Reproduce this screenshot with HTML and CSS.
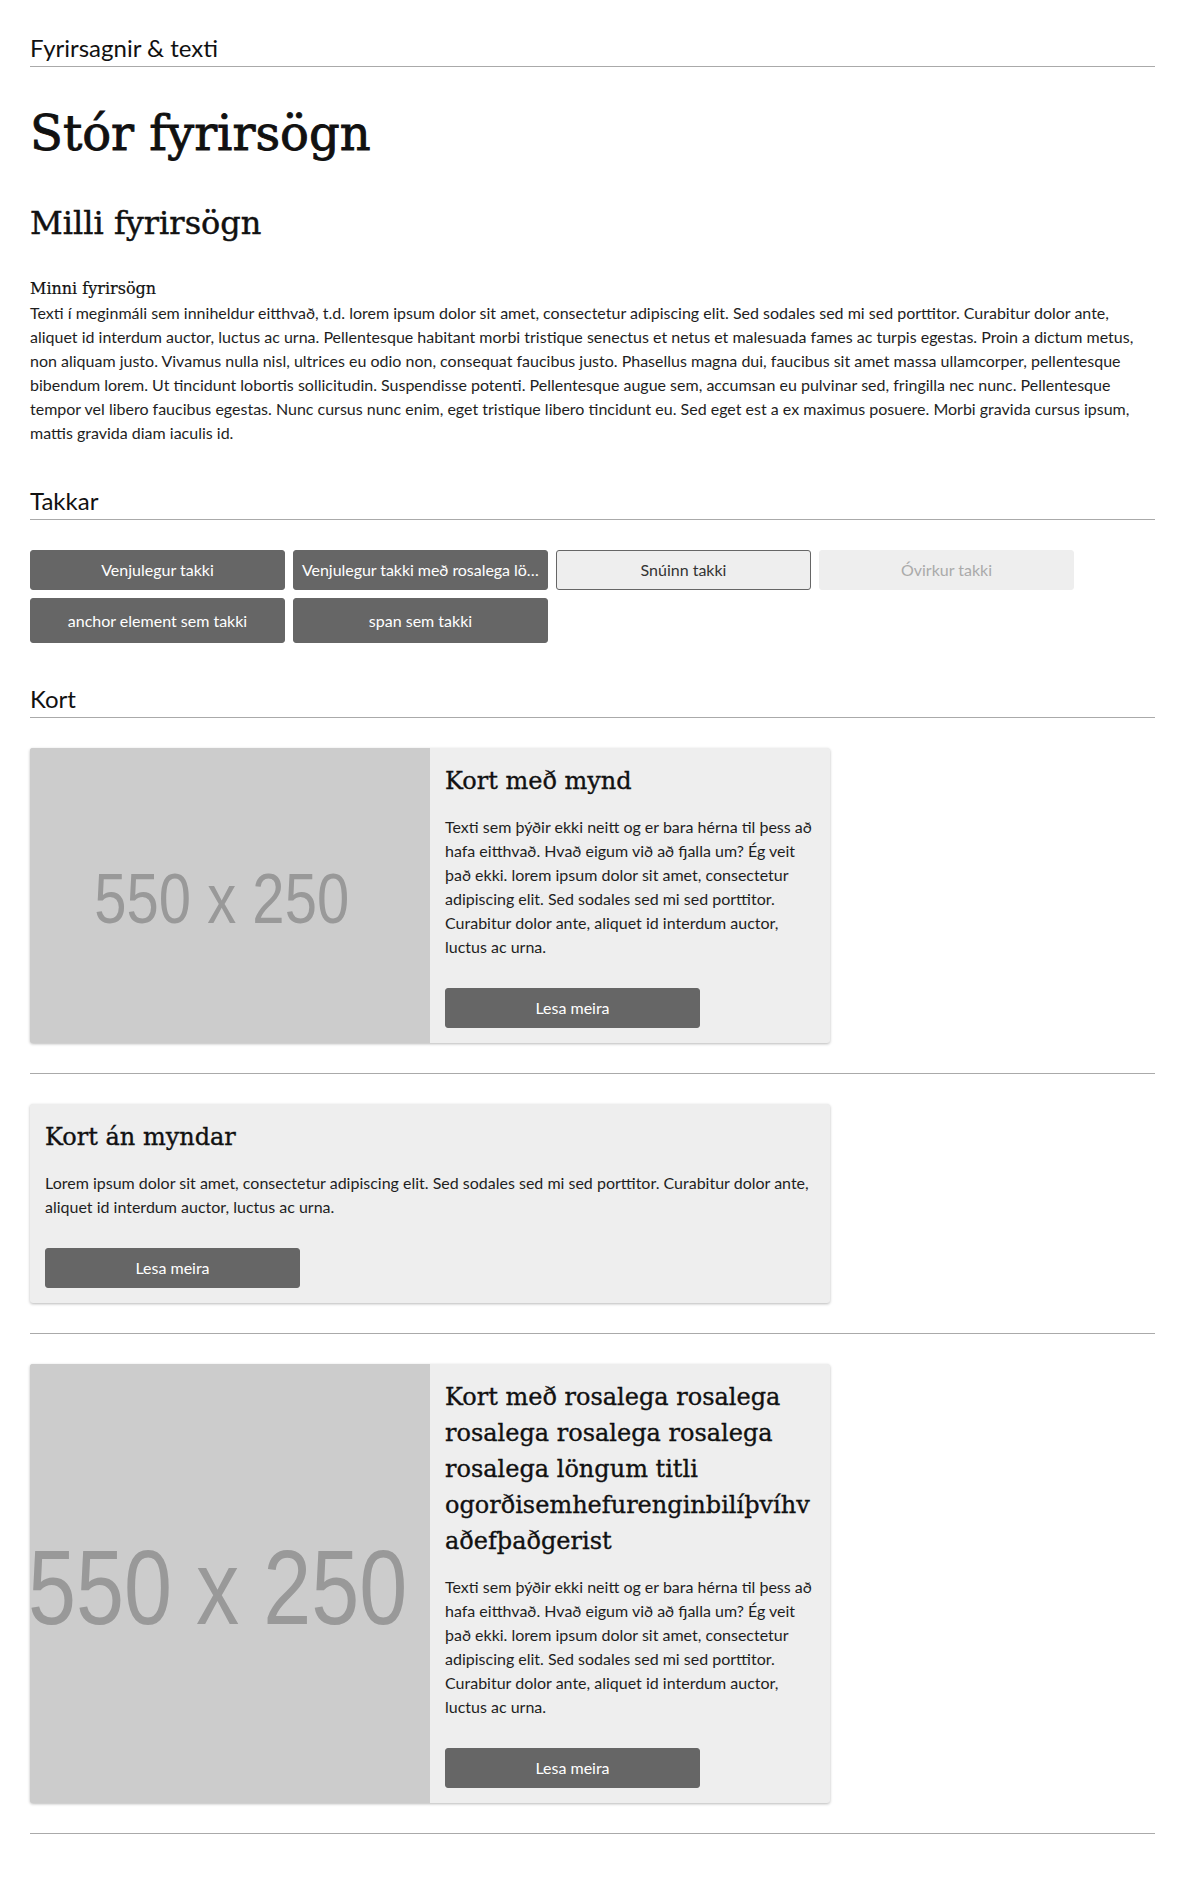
FILE: index.html
```html
<!DOCTYPE html>
<html lang="is">
<head>
<meta charset="utf-8">
<title>Stílasafn</title>
<link rel="stylesheet" href="styles.css">
</head>
<body>
<main class="page">
  <section class="section">
    <h2 class="section-title">Fyrirsagnir &amp; texti</h2>
    <h1 class="heading-large">Stór fyrirsögn</h1>
    <h2 class="heading-mid">Milli fyrirsögn</h2>
    <h4 class="heading-small">Minni fyrirsögn</h4>
    <p class="body-text">Texti í meginmáli sem inniheldur eitthvað, t.d. lorem ipsum dolor sit amet, consectetur adipiscing elit. Sed sodales sed mi sed porttitor. Curabitur dolor ante, aliquet id interdum auctor, luctus ac urna. Pellentesque habitant morbi tristique senectus et netus et malesuada fames ac turpis egestas. Proin a dictum metus, non aliquam justo. Vivamus nulla nisl, ultrices eu odio non, consequat faucibus justo. Phasellus magna dui, faucibus sit amet massa ullamcorper, pellentesque bibendum lorem. Ut tincidunt lobortis sollicitudin. Suspendisse potenti. Pellentesque augue sem, accumsan eu pulvinar sed, fringilla nec nunc. Pellentesque tempor vel libero faucibus egestas. Nunc cursus nunc enim, eget tristique libero tincidunt eu. Sed eget est a ex maximus posuere. Morbi gravida cursus ipsum, mattis gravida diam iaculis id.</p>
  </section>

  <section class="section">
    <h2 class="section-title">Takkar</h2>
    <div class="button-list">
      <button class="btn" type="button">Venjulegur takki</button>
      <button class="btn btn--truncate" type="button">Venjulegur takki með rosalega löngum texta</button>
      <button class="btn btn--inverted" type="button">Snúinn takki</button>
      <button class="btn btn--disabled" type="button" disabled>Óvirkur takki</button>
      <a class="btn btn--element" href="#">anchor element sem takki</a>
      <span class="btn btn--element">span sem takki</span>
    </div>
  </section>

  <section class="section">
    <h2 class="section-title">Kort</h2>

    <article class="card">
      <div class="card-media">
        <svg class="placeholder" viewBox="0 0 550 250" preserveAspectRatio="xMidYMid slice" aria-label="550 x 250">
          <rect width="550" height="250" fill="#cccccc"/>
          <text x="268" y="148" text-anchor="middle" font-family="Liberation Sans, Arial, sans-serif" font-size="60" fill="#999999" textLength="216" lengthAdjust="spacingAndGlyphs">550 x 250</text>
        </svg>
      </div>
      <div class="card-body">
        <h3 class="card-title">Kort með mynd</h3>
        <p class="card-text">Texti sem þýðir ekki neitt og er bara hérna til þess að hafa eitthvað. Hvað eigum við að fjalla um? Ég veit það ekki. lorem ipsum dolor sit amet, consectetur adipiscing elit. Sed sodales sed mi sed porttitor. Curabitur dolor ante, aliquet id interdum auctor, luctus ac urna.</p>
        <div class="card-actions"><a class="btn" href="#">Lesa meira</a></div>
      </div>
    </article>

    <hr class="divider">

    <article class="card">
      <div class="card-body">
        <h3 class="card-title">Kort án myndar</h3>
        <p class="card-text">Lorem ipsum dolor sit amet, consectetur adipiscing elit. Sed sodales sed mi sed porttitor. Curabitur dolor ante, aliquet id interdum auctor, luctus ac urna.</p>
        <div class="card-actions"><a class="btn" href="#">Lesa meira</a></div>
      </div>
    </article>

    <hr class="divider">

    <article class="card">
      <div class="card-media">
        <svg class="placeholder" viewBox="0 0 550 250" preserveAspectRatio="xMidYMid slice" aria-label="550 x 250">
          <rect width="550" height="250" fill="#cccccc"/>
          <text x="268" y="148" text-anchor="middle" font-family="Liberation Sans, Arial, sans-serif" font-size="60" fill="#999999" textLength="216" lengthAdjust="spacingAndGlyphs">550 x 250</text>
        </svg>
      </div>
      <div class="card-body">
        <h3 class="card-title">Kort með rosalega rosalega rosalega rosalega rosalega rosalega löngum titli ogorðisemhefurenginbilíþvíhvaðefþaðgerist</h3>
        <p class="card-text">Texti sem þýðir ekki neitt og er bara hérna til þess að hafa eitthvað. Hvað eigum við að fjalla um? Ég veit það ekki. lorem ipsum dolor sit amet, consectetur adipiscing elit. Sed sodales sed mi sed porttitor. Curabitur dolor ante, aliquet id interdum auctor, luctus ac urna.</p>
        <div class="card-actions"><a class="btn" href="#">Lesa meira</a></div>
      </div>
    </article>

    <hr class="divider">
  </section>
</main>
</body>
</html>
```

FILE: styles.css
```css
* {
  box-sizing: border-box;
}

body {
  margin: 0;
  background: #ffffff;
  color: #1e1e1e;
  font-family: Lato, "Open Sans", "Liberation Sans", sans-serif;
  font-size: 16px;
  line-height: 24px;
}

.page {
  padding: 30px;
}

.section + .section {
  margin-top: 38px;
}

.section-title {
  margin: 0 0 30px;
  font-family: Lato, "Liberation Sans", sans-serif;
  font-size: 24px;
  line-height: 36px;
  font-weight: 400;
  color: #111111;
  border-bottom: 1px solid #aaaaaa;
}

.heading-large,
.heading-mid,
.heading-small,
.card-title {
  font-family: "DejaVu Serif", "Liberation Serif", serif;
  font-weight: 400;
  color: #111111;
}

.heading-large {
  margin: 37px 0 0;
  font-size: 48px;
  line-height: 58px;
  -webkit-text-stroke: 0.9px #111111;
}

.heading-mid {
  margin: 41px 0 0;
  font-size: 32px;
  line-height: 40px;
  -webkit-text-stroke: 0.45px #111111;
}

.heading-small {
  margin: 34px 0 0;
  font-size: 16px;
  line-height: 24px;
  -webkit-text-stroke: 0.2px #111111;
}

.body-text {
  margin: 0;
}

/* Buttons */
.button-list {
  display: flex;
  flex-wrap: wrap;
  align-items: flex-start;
  gap: 8px;
}

.btn {
  display: inline-block;
  width: 255px;
  height: 40px;
  padding: 7px 8px;
  border: 1px solid #666666;
  border-radius: 3px;
  background: #666666;
  color: #ffffff;
  font-family: Lato, "Liberation Sans", sans-serif;
  font-size: 16px;
  line-height: 24px;
  text-align: center;
  text-decoration: none;
  white-space: nowrap;
  overflow: hidden;
  text-overflow: ellipsis;
  cursor: pointer;
}

.btn--truncate {
  padding-right: 2px;
  letter-spacing: -0.05px;
}

.btn--element {
  height: 45px;
  padding-top: 10px;
  padding-bottom: 9px;
}

.btn--inverted {
  background: #eeeeee;
  color: #333333;
}

.btn--disabled {
  background: #eeeeee;
  border-color: #eeeeee;
  color: #aaaaaa;
  cursor: default;
}

/* Cards */
.card {
  display: flex;
  max-width: 800px;
  background: #eeeeee;
  border-radius: 3px;
  box-shadow: 0 1px 3px rgba(0, 0, 0, 0.28);
  overflow: hidden;
}

.card-media {
  flex: 0 0 50%;
  display: flex;
  background: #cccccc;
}

.placeholder {
  display: block;
  width: 100%;
  height: 100%;
}

.card-body {
  flex: 1 1 auto;
  min-width: 0;
  padding: 15px;
}

.card-title {
  margin: 0;
  font-size: 24px;
  line-height: 36px;
  overflow-wrap: break-word;
  -webkit-text-stroke: 0.35px #111111;
}

.card-text {
  margin: 16px 0 0;
}

.card-actions {
  display: flex;
  margin-top: 29px;
}

.divider {
  margin: 30px 0;
  height: 0;
  border: 0;
  border-top: 1px solid #aaaaaa;
}
```
